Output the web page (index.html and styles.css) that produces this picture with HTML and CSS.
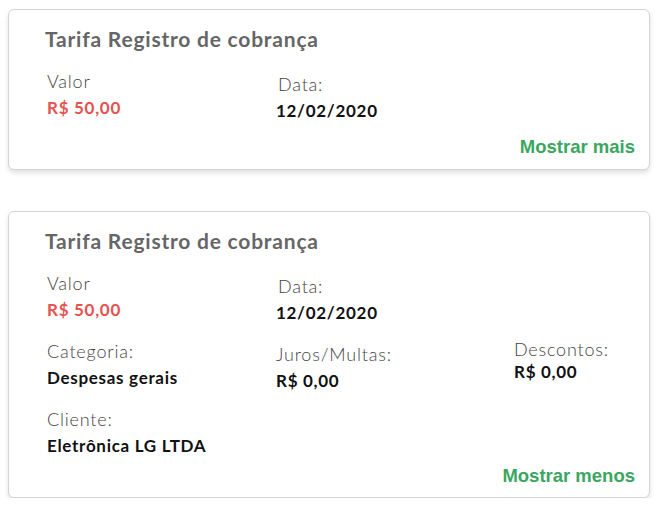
FILE: index.html
```html
<!DOCTYPE html>
<html lang="pt-BR">
<head>
<meta charset="utf-8">
<link rel="stylesheet" href="styles.css">
</head>
<body>
<div class="card card-short">
  <h2 class="title">Tarifa Registro de cobrança</h2>
  <div class="grid">
    <div class="field">
      <div class="label">Valor</div>
      <div class="value value-red">R$ 50,00</div>
    </div>
    <div class="field field-data">
      <div class="label label-data">Data:</div>
      <div class="value">12/02/2020</div>
    </div>
  </div>
  <div class="footer"><a class="toggle">Mostrar mais</a></div>
</div>

<div class="card card-long">
  <h2 class="title">Tarifa Registro de cobrança</h2>
  <div class="grid">
    <div class="field">
      <div class="label">Valor</div>
      <div class="value value-red">R$ 50,00</div>
    </div>
    <div class="field field-data">
      <div class="label label-data">Data:</div>
      <div class="value">12/02/2020</div>
    </div>
    <div class="field"></div>
    <div class="field">
      <div class="label">Categoria:</div>
      <div class="value">Despesas gerais</div>
    </div>
    <div class="field field-juros">
      <div class="label">Juros/Multas:</div>
      <div class="value">R$ 0,00</div>
    </div>
    <div class="field field-desc">
      <div class="label">Descontos:</div>
      <div class="value">R$ 0,00</div>
    </div>
    <div class="field">
      <div class="label">Cliente:</div>
      <div class="value">Eletrônica LG LTDA</div>
    </div>
  </div>
  <div class="footer"><a class="toggle">Mostrar menos</a></div>
</div>
</body>
</html>
```
FILE: styles.css
```css
* { box-sizing: border-box; }
body {
  margin: 0;
  background: #ffffff;
  font-family: "Lato", "Noto Sans", sans-serif;
}
.card {
  margin-left: 8px;
  width: 642px;
  background: #fff;
  border: 1px solid #d4d4d4;
  border-radius: 6px;
  box-shadow: 0 3px 5px rgba(0, 0, 0, 0.12);
  padding: 15px 14px 10px 36px;
}
.card-short { margin-top: 9px; height: 161px; }
.card-long { margin-top: 41px; height: 287px; }
.title {
  margin: 0;
  font-size: 21px;
  line-height: 27px;
  font-weight: 700;
  letter-spacing: 0.78px;
  color: #666666;
}
.grid {
  display: grid;
  grid-template-columns: 229px 238px 1fr;
  padding-left: 2px;
  margin-top: 18px;
  row-gap: 19px;
}
.label {
  font-size: 18px;
  line-height: 22px;
  font-weight: 300;
  letter-spacing: 0.8px;
  color: #444;
}
.label-data { margin-left: 2px; }
.value {
  font-size: 17px;
  line-height: 22px;
  font-weight: 700;
  letter-spacing: 0.7px;
  color: #111;
  margin-top: 5px;
}
.value-red { color: #e5524f; }
.field-data { margin-top: 3px; margin-bottom: -3px; }
.field-juros { margin-top: 3px; margin-bottom: -3px; }
.field-desc { margin-top: -2px; }
.field-desc .value { margin-top: 1px; }
.footer {
  display: flex;
  justify-content: flex-end;
}
.card-short .footer { margin-top: 17px; }
.card-long .footer { margin-top: 8px; }
.toggle {
  font-family: "Liberation Sans", Arial, sans-serif;
  font-weight: 700;
  font-size: 18.5px;
  color: #3aa65f;
  cursor: pointer;
}
```
